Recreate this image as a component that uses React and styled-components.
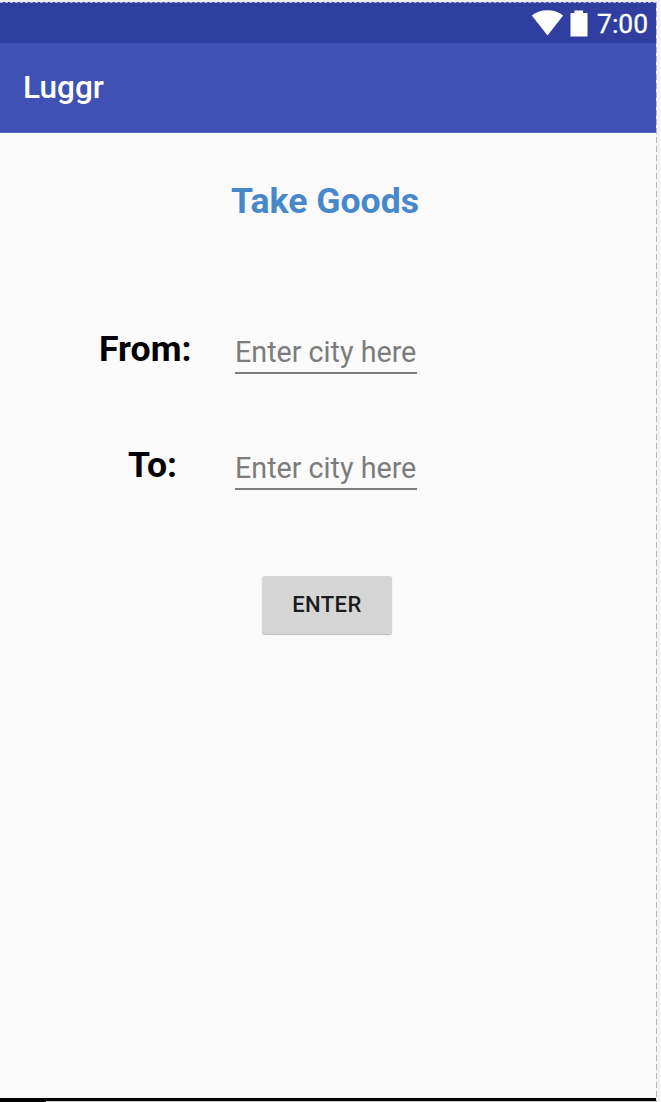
import { Component } from "react";
import styled, { createGlobalStyle } from "styled-components";

const GlobalStyle = createGlobalStyle`
  * {
    box-sizing: border-box;
  }
  body {
    margin: 0;
    background-color: #f3f3f3;
    font-family: Roboto, "Liberation Sans", sans-serif;
    overflow: hidden;
  }
`;
const Page = styled.div`
  width: 661px;
  height: 1102px;
  display: grid;
  grid-template-columns: 656px 1px 4px;
  grid-template-rows: 2px 1fr 4px;
`;
const TopEdge = styled.div`
  grid-column: 1 / -1;
  background-color: #f0f0f0;
`;
const Screen = styled.div`
  display: flex;
  flex-direction: column;
  background-color: #fafafa;
`;
const SideEdge = styled.div`
  grid-row: 2 / 4;
  grid-column: 2;
  background: repeating-linear-gradient(
    to bottom,
    #b4b4b4 0 6px,
    #f3f3f3 6px 9px
  );
`;
const BottomEdge = styled.div`
  grid-row: 3;
  grid-column: 1;
  display: flex;
  justify-content: flex-end;
  align-items: flex-end;
  background-color: #000;
`;
const BottomStrip = styled.div`
  width: 610px;
  height: 1px;
  background-color: #c9c9c9;
`;
const StatusBar = styled.div`
  height: 41px;
  padding-right: 8px;
  display: flex;
  justify-content: flex-end;
  border-top: 1px dashed #a9afd8;
  background-color: #303f9f;
`;
const Icon = styled.svg`
  display: block;
  margin-top: 7px;
  margin-right: ${(props) => props.$gap}px;
`;
const Time = styled.span`
  font-size: 26.4px;
  line-height: 30px;
  margin-top: 6px;
  color: #fff;
  -webkit-text-stroke: 0.3px #fff;
`;
const AppBar = styled.header`
  height: 90px;
  padding: 0 23px;
  display: flex;
  align-items: center;
  background-color: #3f51b5;
  border-bottom: 1px solid #5c6bc0;
`;
const AppTitle = styled.h1`
  margin: 0;
  font-size: 31.5px;
  font-weight: 500;
  line-height: 38px;
  color: #fff;
`;
const Title = styled.h2`
  width: 650px;
  margin: 47px 0 0;
  font-size: 35.6px;
  font-weight: 700;
  line-height: 42px;
  text-align: center;
  color: #4688ca;
`;
const Form = styled.form`
  margin-top: 105px;
  display: flex;
  flex-direction: column;
`;
const Row = styled.div`
  height: 116px;
  display: grid;
  grid-template-columns: 235px 182px;
  align-items: start;
`;
const Label = styled.label`
  margin-top: 1px;
  padding-left: ${(props) => props.$indent}px;
  font-size: 35.6px;
  font-weight: 700;
  line-height: 42px;
  color: #000;
`;
const Input = styled.input`
  width: 182px;
  height: 47px;
  padding: 5px 0 0;
  border: none;
  border-bottom: 2px solid #7d7d7d;
  border-radius: 0;
  outline: none;
  background-color: transparent;
  font-family: inherit;
  font-size: 28.7px;
  color: #212121;
  &::placeholder {
    color: #7c7c7c;
    opacity: 1;
  }
`;
const EnterBtn = styled.button`
  width: 130px;
  height: 58px;
  margin: 17px 0 0 262px;
  padding: 0 0 1px;
  border: none;
  border-radius: 3px;
  background-color: #d6d6d6;
  box-shadow: 0 1px 1px rgba(0, 0, 0, 0.25);
  font-family: inherit;
  font-size: 22px;
  font-weight: 500;
  letter-spacing: 0.4px;
  color: #1c1c1c;
`;

class App extends Component {
  state = {
    from: "",
    to: "",
  };
  setValue = (e) => this.setState({ [e.target.name]: e.target.value });
  submit = (e) => e.preventDefault();

  render() {
    return (
      <>
        <GlobalStyle />
        <Page>
          <TopEdge />
          <Screen>
            <StatusBar>
              <Icon width="33" height="27" viewBox="0 0 33 27" $gap={6}>
                <path
                  d="M16.5 25.5 L0.8 5.5 C9.5 -1.5 23.5 -1.5 32.2 5.5 Z"
                  fill="#fff"
                />
              </Icon>
              <Icon width="18" height="27" viewBox="0 0 18 27" $gap={9}>
                <path d="M4.5 0.5 H13 V3 H17.5 V26.5 H0.5 V3 H4.5 Z" fill="#fff" />
              </Icon>
              <Time>7:00</Time>
            </StatusBar>
            <AppBar>
              <AppTitle>Luggr</AppTitle>
            </AppBar>
            <Title>Take Goods</Title>
            <Form onSubmit={this.submit}>
              <Row>
                <Label htmlFor="from" $indent={99}>
                  From:
                </Label>
                <Input
                  id="from"
                  name="from"
                  placeholder="Enter city here"
                  autoComplete="off"
                  value={this.state.from}
                  onChange={this.setValue}
                />
              </Row>
              <Row>
                <Label htmlFor="to" $indent={128}>
                  To:
                </Label>
                <Input
                  id="to"
                  name="to"
                  placeholder="Enter city here"
                  autoComplete="off"
                  value={this.state.to}
                  onChange={this.setValue}
                />
              </Row>
              <EnterBtn>ENTER</EnterBtn>
            </Form>
          </Screen>
          <SideEdge />
          <BottomEdge>
            <BottomStrip />
          </BottomEdge>
        </Page>
      </>
    );
  }
}

export default App;
